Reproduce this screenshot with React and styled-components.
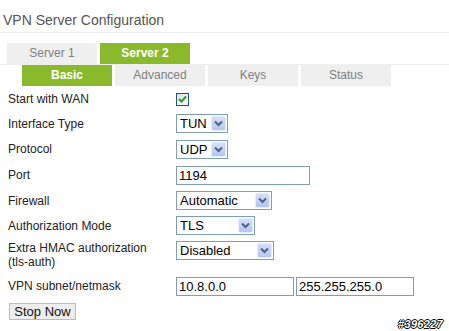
import styled, { createGlobalStyle } from 'styled-components';

const Global = createGlobalStyle`
    html, body { margin: 0; padding: 0; background: #fff; }
`;

const GREEN = '#8aba2c';

const Page = styled.div`
    width: 449px;
    height: 331px;
    overflow: hidden;
    background: #fff;
    font-family: "Liberation Sans", Arial, sans-serif;
`;

const Title = styled.h1`
    margin: 0;
    height: 33px;
    box-sizing: border-box;
    padding: 12px 0 0 3px;
    font-size: 14px;
    line-height: 16px;
    font-weight: normal;
    color: #555;
    border-bottom: 1px solid #ececec;
`;

const TabRow = styled.div`
    display: flex;
    gap: 3px;
    padding-left: ${({ indent }) => indent}px;
    margin-top: ${({ top }) => top || 0}px;
    border-bottom: ${({ line }) => (line ? '1px solid #efefef' : 'none')};
`;

const Tab = styled.div`
    width: 90px;
    height: 21px;
    line-height: 21px;
    text-align: center;
    font-size: 12px;
    font-weight: ${({ active }) => (active ? 'bold' : 'normal')};
    color: ${({ active }) => (active ? '#fff' : '#808080')};
    background: ${({ active }) => (active ? GREEN : '#efefef')};
`;

const Form = styled.div`
    padding-left: 8px;
    margin-top: 1px;
`;

const Row = styled.div`
    display: grid;
    grid-template-columns: 168px auto;
    align-items: ${({ top }) => (top ? 'start' : 'center')};
    height: ${({ h }) => h}px;
    padding-top: ${({ top }) => (top ? 3 : 0)}px;
    box-sizing: border-box;
`;

const Label = styled.div`
    font-size: 12px;
    line-height: 14px;
    color: #222;
`;

const Controls = styled.div`
    display: flex;
    gap: 2px;
    align-items: center;
`;

const Check = styled.span`
    width: 13px;
    height: 13px;
    box-sizing: border-box;
    border: 1px solid #1c5180;
    background: linear-gradient(135deg, #dcdcd7, #fff);
    display: flex;
    align-items: center;
    justify-content: center;
`;

const Select = styled.div`
    width: ${({ w }) => w}px;
    height: 19px;
    box-sizing: border-box;
    border: 1px solid #7f9db9;
    background: #fff;
    display: flex;
    align-items: center;
    justify-content: space-between;
    padding: 0 1px 0 3px;
    font-size: 13px;
    color: #000;
`;

const Arrow = styled.span`
    width: 15px;
    height: 15px;
    box-sizing: border-box;
    border: 1px solid #e4ecfd;
    border-radius: 2px;
    background: linear-gradient(#d3def9, #b3c6f3);
    display: flex;
    align-items: center;
    justify-content: center;
`;

const Input = styled.input`
    width: ${({ w }) => w}px;
    height: 19px;
    box-sizing: border-box;
    border: 1px solid #7f9db9;
    padding: 0 2px;
    margin: 0;
    font-family: "Liberation Sans", Arial, sans-serif;
    font-size: 13px;
    color: #000;
    outline: none;
`;

const Footer = styled.div`
    display: flex;
    justify-content: space-between;
    align-items: flex-start;
    padding: 4px 6px 0 9px;
`;

const Button = styled.button`
    width: 67px;
    height: 17px;
    padding: 0;
    background: #ededed;
    border: 1px solid #bcbcbc;
    font-family: "Liberation Sans", Arial, sans-serif;
    font-size: 13px;
    line-height: 15px;
    color: #111;
`;

const Mark = styled.span`
    margin-top: 15px;
    font-size: 11px;
    font-weight: bold;
    font-style: italic;
    letter-spacing: 0.3px;
    color: #fff;
    text-shadow: 1px 0 #000, -1px 0 #000, 0 1px #000, 0 -1px #000;
`;

const Dropdown = ({ w, value }) => (
    <Select w={w}>
        {value}
        <Arrow>
            <svg width="9" height="7" viewBox="0 0 9 7">
                <path d="M1 1.5 L4.5 5 L8 1.5" fill="none" stroke="#4d6185" strokeWidth="2" />
            </svg>
        </Arrow>
    </Select>
);

const rows = [
    { label: 'Interface Type', h: 25, select: { w: 52, value: 'TUN' } },
    { label: 'Protocol', h: 26, select: { w: 52, value: 'UDP' } },
    { label: 'Port', h: 26, input: [{ w: 134, value: '1194' }] },
    { label: 'Firewall', h: 25, select: { w: 96, value: 'Automatic' } },
    { label: 'Authorization Mode', h: 25, select: { w: 79, value: 'TLS' } },
];

export default function App() {
    return (
        <Page>
            <Global />
            <Title>VPN Server Configuration</Title>
            <TabRow indent={7} top={10} line>
                <Tab>Server 1</Tab>
                <Tab active>Server 2</Tab>
            </TabRow>
            <TabRow indent={22}>
                <Tab active>Basic</Tab>
                <Tab>Advanced</Tab>
                <Tab>Keys</Tab>
                <Tab>Status</Tab>
            </TabRow>
            <Form>
                <Row h={24}>
                    <Label>Start with WAN</Label>
                    <Controls>
                        <Check>
                            <svg width="9" height="8" viewBox="0 0 9 8">
                                <path d="M1 4 L3.5 6.5 L8 1.5" fill="none" stroke="#21a121" strokeWidth="2" />
                            </svg>
                        </Check>
                    </Controls>
                </Row>
                {rows.map((r) => (
                    <Row h={r.h} key={r.label}>
                        <Label>{r.label}</Label>
                        <Controls>
                            {r.select && <Dropdown w={r.select.w} value={r.select.value} />}
                            {r.input && r.input.map((i) => <Input key={i.value} w={i.w} defaultValue={i.value} />)}
                        </Controls>
                    </Row>
                ))}
                <Row h={35} top>
                    <Label>Extra HMAC authorization<br />(tls-auth)</Label>
                    <Controls>
                        <Dropdown w={98} value="Disabled" />
                    </Controls>
                </Row>
                <Row h={26}>
                    <Label>VPN subnet/netmask</Label>
                    <Controls>
                        <Input w={118} defaultValue="10.8.0.0" />
                        <Input w={118} defaultValue="255.255.255.0" />
                    </Controls>
                </Row>
            </Form>
            <Footer>
                <Button>Stop Now</Button>
                <Mark>#396227</Mark>
            </Footer>
        </Page>
    );
}
